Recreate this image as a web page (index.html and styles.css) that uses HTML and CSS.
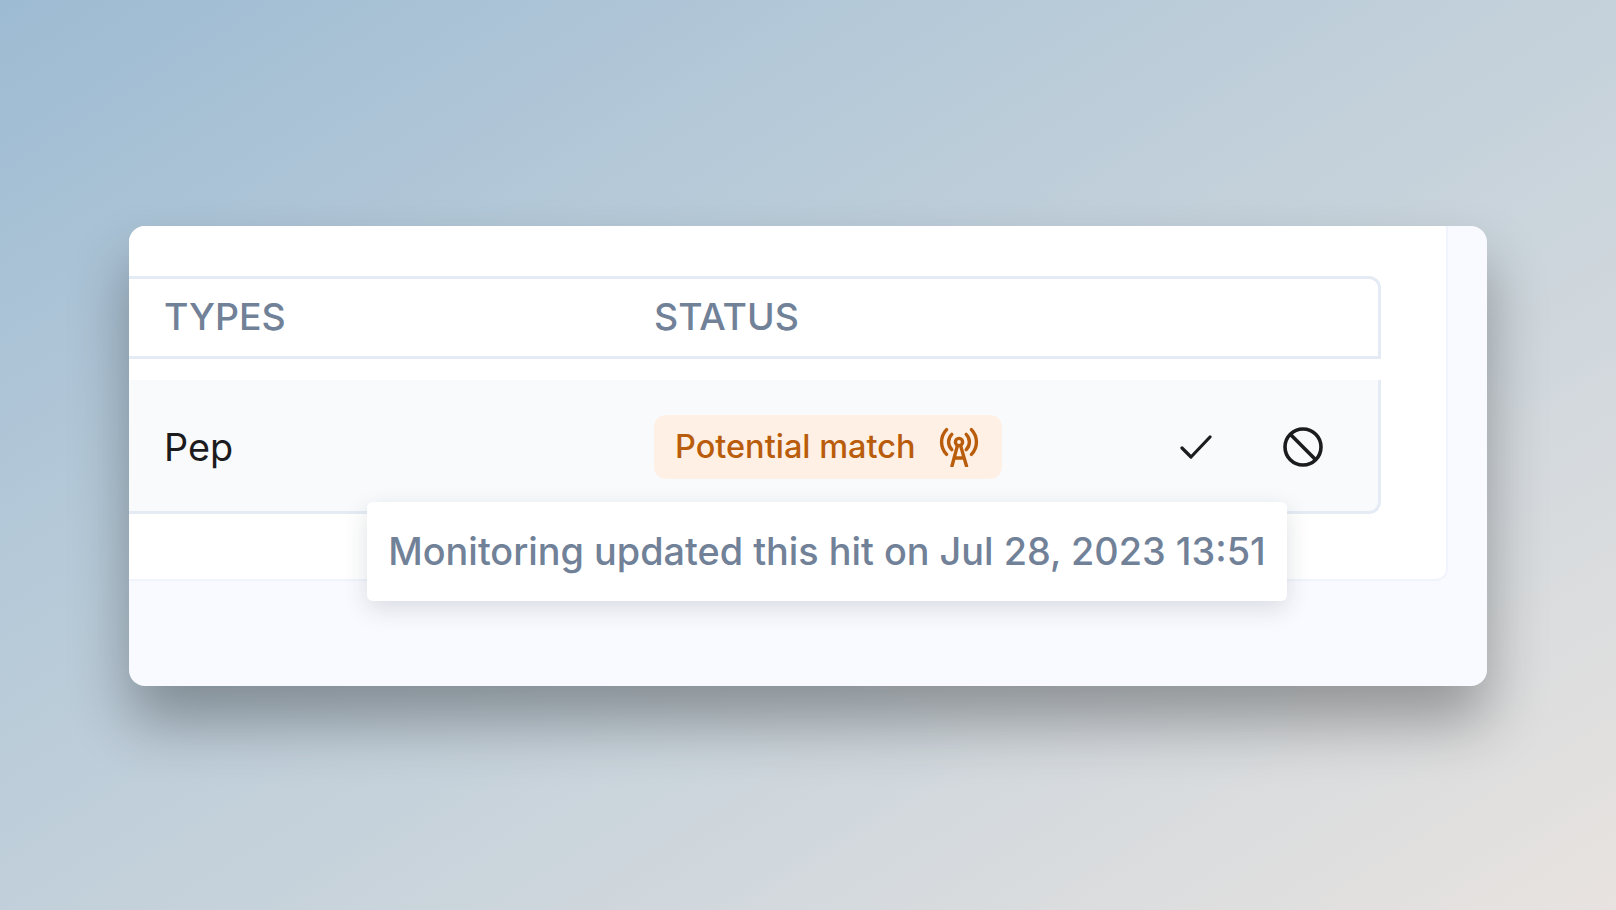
FILE: index.html
```html
<!DOCTYPE html>
<html lang="en">
<head>
<meta charset="utf-8">
<title>Monitoring hit</title>
<link rel="stylesheet" href="styles.css">
</head>
<body>
<main class="card">
  <section class="panel">
    <div class="table-head">
      <div class="col-types">TYPES</div>
      <div class="col-status">STATUS</div>
    </div>
    <div class="table-row">
      <div class="col-types pep">Pep</div>
      <div class="col-status">
        <span class="badge">
          <span class="badge-label">Potential match</span>
          <svg class="tower" viewBox="0 0 40 40" fill="none" stroke="currentColor" stroke-width="3.4" stroke-linecap="round" stroke-linejoin="round">
            <circle cx="20" cy="15" r="3.6"/>
            <path d="M18.4 18.6 13 39M21.6 18.6 27.5 39M15 31h10"/>
            <path d="M12.8 22.6a10.6 10.6 0 0 1 0-15.2M27.2 7.4a10.6 10.6 0 0 1 0 15.2"/>
            <path d="M7.6 27.4a17.8 17.8 0 0 1 0-24.8M32.4 2.6a17.8 17.8 0 0 1 0 24.8"/>
          </svg>
        </span>
      </div>
      <div class="actions">
        <svg class="check" viewBox="0 0 32 24" fill="none" stroke="currentColor" stroke-width="3.2" stroke-linecap="round" stroke-linejoin="round"><path d="M2 13 11 22 30 2"/></svg>
        <svg class="ban" viewBox="0 0 40 40" fill="none" stroke="currentColor" stroke-width="3.6"><circle cx="20" cy="20" r="18"/><path d="M7.3 7.3 32.7 32.7"/></svg>
      </div>
    </div>
  </section>
  <div class="tooltip">Monitoring updated this hit on Jul 28, 2023 13:51</div>
</main>
</body>
</html>
```

FILE: styles.css
```css
* { box-sizing: border-box; }

html, body { height: 100%; }

body {
  margin: 0;
  height: 910px;
  overflow: hidden;
  padding: 226px 0 0 129px;
  font-family: Inter, "Noto Sans", sans-serif;
  background: linear-gradient(148deg, #9dbbd3 0%, #b5c9d8 30%, #cbd5dc 62%, #e8e3e0 100%);
}

.card {
  position: relative;
  width: 1358px;
  height: 460px;
  background: #f9faff;
  border-radius: 16px;
  box-shadow: 0 36px 60px rgba(0, 0, 0, 0.32);
}

.panel {
  width: 1319px;
  height: 355px;
  padding-top: 50px;
  background: #fff;
  border-top-left-radius: 16px;
  border-right: 2px solid #f1f4fc;
  border-bottom: 2px solid #f1f4fc;
  border-bottom-right-radius: 12px;
}

.table-head,
.table-row {
  display: flex;
  align-items: center;
  width: 1252px;
  border-right: 3px solid #e5ebf4;
  border-bottom: 3px solid #e5ebf4;
}

.table-head {
  height: 83px;
  border-top: 3px solid #e5ebf4;
  border-top-right-radius: 12px;
  color: #718198;
  font-size: 37.4px;
  font-weight: 500;
  padding-bottom: 2px;
}

.table-row {
  height: 134px;
  margin-top: 21px;
  padding-top: 3px;
  background: #f8fafc;
  border-bottom-right-radius: 12px;
}

.col-types {
  width: 525px;
  padding-left: 35px;
  flex: none;
}

.col-status {
  flex: none;
}

.pep {
  color: #1c1c1e;
  font-size: 37.8px;
}

.badge {
  display: flex;
  align-items: center;
  justify-content: space-between;
  width: 348px;
  height: 64px;
  padding: 0 23px 0 21px;
  border-radius: 12px;
  background: #fff0e6;
  color: #b95c0b;
  font-size: 32.5px;
  font-weight: 500;
}

.badge-label {
  padding-bottom: 2px;
}

.tower {
  width: 40px;
  height: 40px;
  flex: none;
}

.actions {
  display: flex;
  align-items: center;
  margin-left: 178px;
  color: #1c1c1e;
}

.check {
  width: 32px;
  height: 24px;
}

.ban {
  width: 40px;
  height: 40px;
  margin-left: 71px;
}

.tooltip {
  position: absolute;
  left: 238px;
  top: 276px;
  width: 920px;
  height: 99px;
  padding-bottom: 2px;
  display: flex;
  align-items: center;
  justify-content: center;
  border-radius: 6px;
  background: #fff;
  color: #718198;
  font-size: 37.8px;
  font-weight: 500;
  white-space: nowrap;
  box-shadow: 0 8px 24px rgba(30, 41, 59, 0.14);
}
```
